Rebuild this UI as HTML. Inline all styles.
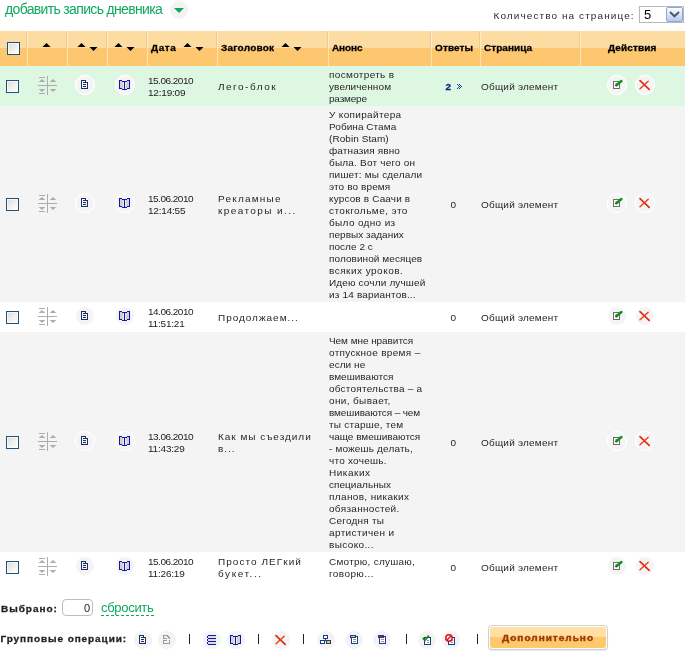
<!DOCTYPE html><html><head><meta charset="utf-8"><title>Дневник</title><style>
html,body{margin:0;padding:0;background:#fff;}
body{width:685px;height:657px;position:relative;overflow:hidden;will-change:transform;font-family:"Liberation Sans",sans-serif;color:#222;}
.abs{position:absolute;}
.t{position:absolute;white-space:nowrap;line-height:13.714px;font-size:10px;letter-spacing:0.1px;color:#262626;transform-origin:0 0;transform:scaleY(0.875);}
.hd{position:absolute;left:0;top:31px;width:685px;height:35px;background:linear-gradient(#fddca1 0,#fddca1 17px,#fdc76f 17px,#fdc76f 35px);}
.sep{position:absolute;top:0;width:1px;height:35px;}
.sepd{background:linear-gradient(#f2c98c 0,#f2c98c 17px,#fdc76f 17px);}
.sepl{background:linear-gradient(#feecca 0,#feecca 17px,#fee3b7 17px);}
.ht{position:absolute;top:12.3px;font-weight:bold;font-size:10px;line-height:12px;color:#000;white-space:nowrap;transform-origin:0 0;transform:scaleY(0.875);-webkit-text-stroke:0.3px #000;}
.sq{transform-origin:0 0;transform:scaleY(0.875);}
.row{position:absolute;left:0;width:685px;}
.cb{position:absolute;width:11px;height:11px;border:1px solid #1c5180;background:linear-gradient(135deg,#dcdcd7 0,#f3f3ef 60%,#fff 100%);box-shadow:inset 0 0 0 1px rgba(252,252,248,0.75);}
.circ{position:absolute;width:18px;height:18px;border:1px solid #fff;border-radius:50%;background:#f4f4f4;}
svg{position:absolute;overflow:visible;}
</style></head><body>
<div class="abs" style="left:5px;top:1px;font-size:14px;line-height:16px;letter-spacing:-0.66px;color:#0fa860;white-space:nowrap;">добавить запись дневника</div>
<div class="abs" style="left:170px;top:1px;width:18px;height:18px;border-radius:50%;background:#f3f3f3;"></div>
<svg style="left:174px;top:8px" width="10" height="5"><path d="M0 0H10L5 5Z" fill="#0fa860"/></svg>
<div class="abs sq" style="left:493.5px;top:9.8px;font-size:10px;line-height:13px;letter-spacing:1.09px;color:#2c2c2c;white-space:nowrap;">Количество на странице:</div>
<div class="abs" style="left:639px;top:6px;width:43px;height:15px;border:1px solid #b8b8b8;background:#fff;"></div>
<div class="abs" style="left:644px;top:7px;font-size:13px;line-height:15px;color:#000;">5</div>
<div class="abs" style="left:666px;top:7px;width:15px;height:13px;border:1px solid #8fa8d0;border-radius:2px;background:linear-gradient(#fdfeff 0,#dce7f7 45%,#b4caea 100%);"></div>
<svg style="left:669px;top:11px" width="11" height="7"><path d="M1 1L5.5 5.3L10 1" stroke="#4d5a6b" stroke-width="2" fill="none"/></svg>
<div class="hd">
<div class="sep sepd" style="left:26px"></div><div class="sep sepl" style="left:27px"></div>
<div class="sep sepd" style="left:66px"></div><div class="sep sepl" style="left:67px"></div>
<div class="sep sepd" style="left:106px"></div><div class="sep sepl" style="left:107px"></div>
<div class="sep sepd" style="left:146px"></div><div class="sep sepl" style="left:147px"></div>
<div class="sep sepd" style="left:216px"></div><div class="sep sepl" style="left:217px"></div>
<div class="sep sepd" style="left:327px"></div><div class="sep sepl" style="left:328px"></div>
<div class="sep sepd" style="left:430px"></div><div class="sep sepl" style="left:431px"></div>
<div class="sep sepd" style="left:479px"></div><div class="sep sepl" style="left:480px"></div>
<div class="sep sepd" style="left:579px"></div><div class="sep sepl" style="left:580px"></div>
<div class="cb" style="left:7px;top:11px"></div>
<svg style="left:43px;top:12px" width="7" height="4"><path d="M3.5 0L7.5 4H-0.5Z" fill="#000"/></svg>
<svg style="left:78px;top:12px" width="7" height="4"><path d="M3.5 0L7.5 4H-0.5Z" fill="#000"/></svg><svg style="left:90px;top:16px" width="7" height="4"><path d="M-0.5 0H7.5L3.5 4Z" fill="#000"/></svg>
<svg style="left:115px;top:12px" width="7" height="4"><path d="M3.5 0L7.5 4H-0.5Z" fill="#000"/></svg><svg style="left:127px;top:16px" width="7" height="4"><path d="M-0.5 0H7.5L3.5 4Z" fill="#000"/></svg>
<div class="ht" style="left:151px;letter-spacing:0.55px">Дата</div><svg style="left:184px;top:12px" width="7" height="4"><path d="M3.5 0L7.5 4H-0.5Z" fill="#000"/></svg><svg style="left:196px;top:16px" width="7" height="4"><path d="M-0.5 0H7.5L3.5 4Z" fill="#000"/></svg>
<div class="ht" style="left:221px;letter-spacing:0.24px">Заголовок</div><svg style="left:282px;top:12px" width="7" height="4"><path d="M3.5 0L7.5 4H-0.5Z" fill="#000"/></svg><svg style="left:294px;top:16px" width="7" height="4"><path d="M-0.5 0H7.5L3.5 4Z" fill="#000"/></svg>
<div class="ht" style="left:332px;letter-spacing:-0.1px">Анонс</div>
<div class="ht" style="left:435px;letter-spacing:0.12px">Ответы</div>
<div class="ht" style="left:484px;letter-spacing:0.04px">Страница</div>
<div class="ht" style="left:608px;letter-spacing:0.1px">Действия</div>
</div>
<div class="row" style="top:66px;height:40px;background:#def7e3">
<div class="cb" style="left:6px;top:14px"></div>
<svg style="left:38px;top:10px" width="19" height="19" shape-rendering="crispEdges"><rect x="9" y="0" width="1" height="19" fill="#b0abae"/><rect x="0" y="9" width="19" height="1" fill="#b0abae"/><rect x="1" y="1" width="6" height="1" fill="#b0abae"/><rect x="1" y="17" width="6" height="1" fill="#b0abae"/></svg><svg style="left:38px;top:10px" width="19" height="19"><path d="M4 3L7.3 6H0.7Z M15 3L18.3 6H11.7Z M0.7 13H7.3L4 16Z M11.7 13H18.3L15 16Z" fill="#b0abae"/></svg>
<div class="circ" style="left:75px;top:9px"></div><svg style="left:75px;top:9px" width="20" height="20" shape-rendering="crispEdges"><circle cx="10" cy="10" r="9.5" fill="none" stroke="#fff" stroke-width="1"/></svg><svg style="left:81px;top:14px" width="7" height="9" shape-rendering="crispEdges"><path d="M0 0H5V2H7V9H0Z M1 1V8H6V3H4V1Z" fill="#1b2f6b" fill-rule="evenodd"/><rect x="2" y="2" width="2" height="1" fill="#1b2f6b"/><rect x="2" y="4" width="3" height="1" fill="#1b2f6b"/><rect x="2" y="6" width="3" height="1" fill="#1b2f6b"/></svg>
<div class="circ" style="left:115px;top:9px"></div><svg style="left:115px;top:9px" width="20" height="20" shape-rendering="crispEdges"><circle cx="10" cy="10" r="9.5" fill="none" stroke="#fff" stroke-width="1"/></svg><svg style="left:119px;top:14px" width="11" height="10" shape-rendering="crispEdges"><rect x="1" y="1" width="4" height="8" fill="#d2d2d2"/><rect x="6" y="1" width="4" height="8" fill="#d2d2d2"/><rect x="4" y="2" width="1" height="7" fill="#ecece0"/><rect x="6" y="2" width="1" height="7" fill="#ecece0"/><rect x="0" y="0" width="1" height="9" fill="#1414b4"/><rect x="10" y="0" width="1" height="9" fill="#1414b4"/><rect x="0" y="0" width="3" height="1" fill="#1414b4"/><rect x="8" y="0" width="3" height="1" fill="#1414b4"/><rect x="3" y="1" width="2" height="1" fill="#1414b4"/><rect x="6" y="1" width="2" height="1" fill="#1414b4"/><rect x="5" y="1" width="1" height="9" fill="#1414b4"/><rect x="0" y="8" width="3" height="1" fill="#1414b4"/><rect x="8" y="8" width="3" height="1" fill="#1414b4"/><rect x="3" y="9" width="5" height="1" fill="#1414b4"/></svg>
<div class="t" style="left:148px;top:8.5px;letter-spacing:-0.5px;color:#222">15.06.2010</div><div class="t" style="left:148px;top:20.5px;letter-spacing:-0.2px;color:#222">12:19:09</div>
<div class="t" style="left:218px;top:15px;letter-spacing:1.5px">Лего-блок</div>
<div class="t" style="left:329px;top:3px;letter-spacing:0.33px">посмотреть в</div><div class="t" style="left:329px;top:15px;letter-spacing:0.09px">увеличенном</div><div class="t" style="left:329px;top:27px;letter-spacing:-0.19px">размере</div>
<div class="t" style="left:445.5px;top:15px;font-weight:bold;color:#0a2a80;letter-spacing:0;-webkit-text-stroke:0.3px #0a2a80">2</div>
<svg style="left:457px;top:18px" width="5" height="5" shape-rendering="crispEdges"><path d="M0 0h1v1h-1zM2 0h1v1h-1zM1 1h1v1h-1zM3 1h1v1h-1zM2 2h1v1h-1zM4 2h1v1h-1zM1 3h1v1h-1zM3 3h1v1h-1zM0 4h1v1h-1zM2 4h1v1h-1z" fill="#1848a0"/></svg>
<div class="t" style="left:481px;top:15px;letter-spacing:0.21px">Общий элемент</div>
<div class="circ" style="left:607px;top:9px"></div><svg style="left:607px;top:9px" width="20" height="20" shape-rendering="crispEdges"><circle cx="10" cy="10" r="9.5" fill="none" stroke="#fff" stroke-width="1"/></svg><svg style="left:613px;top:14px" width="10" height="10"><rect x="0.5" y="1.5" width="6" height="7" fill="#fff" stroke="#6e6e6e" stroke-width="1"/><path d="M2.5 3.5H4M2.5 5.5H3.5" stroke="#8a8a8a" stroke-width="1"/><path d="M3.4 5.3L8.4 1" stroke="#0f9618" stroke-width="2.5" stroke-linecap="round"/><rect x="2" y="5" width="2" height="1" fill="#2a5a2a"/></svg>
<div class="circ" style="left:635px;top:9px"></div><svg style="left:635px;top:9px" width="20" height="20" shape-rendering="crispEdges"><circle cx="10" cy="10" r="9.5" fill="none" stroke="#fff" stroke-width="1"/></svg><svg style="left:639px;top:14px" width="11" height="10"><path d="M1 0.6L10.2 9.3" stroke="#e02c0c" stroke-width="1.7" stroke-linecap="round"/><path d="M9.2 1.2L1 8.8" stroke="#e6401c" stroke-width="1.4" stroke-linecap="round"/></svg>
</div>
<div class="row" style="top:106px;height:196px;background:#f4f4f4">
<div class="cb" style="left:6px;top:92px"></div>
<svg style="left:38px;top:88px" width="19" height="19" shape-rendering="crispEdges"><rect x="9" y="0" width="1" height="19" fill="#b0abae"/><rect x="0" y="9" width="19" height="1" fill="#b0abae"/><rect x="1" y="1" width="6" height="1" fill="#b0abae"/><rect x="1" y="17" width="6" height="1" fill="#b0abae"/></svg><svg style="left:38px;top:88px" width="19" height="19"><path d="M4 3L7.3 6H0.7Z M15 3L18.3 6H11.7Z M0.7 13H7.3L4 16Z M11.7 13H18.3L15 16Z" fill="#b0abae"/></svg>
<div class="circ" style="left:75px;top:87px"></div><svg style="left:75px;top:87px" width="20" height="20" shape-rendering="crispEdges"><circle cx="10" cy="10" r="9.5" fill="none" stroke="#fff" stroke-width="1"/></svg><svg style="left:81px;top:92px" width="7" height="9" shape-rendering="crispEdges"><path d="M0 0H5V2H7V9H0Z M1 1V8H6V3H4V1Z" fill="#1b2f6b" fill-rule="evenodd"/><rect x="2" y="2" width="2" height="1" fill="#1b2f6b"/><rect x="2" y="4" width="3" height="1" fill="#1b2f6b"/><rect x="2" y="6" width="3" height="1" fill="#1b2f6b"/></svg>
<div class="circ" style="left:115px;top:87px"></div><svg style="left:115px;top:87px" width="20" height="20" shape-rendering="crispEdges"><circle cx="10" cy="10" r="9.5" fill="none" stroke="#fff" stroke-width="1"/></svg><svg style="left:119px;top:92px" width="11" height="10" shape-rendering="crispEdges"><rect x="1" y="1" width="4" height="8" fill="#d2d2d2"/><rect x="6" y="1" width="4" height="8" fill="#d2d2d2"/><rect x="4" y="2" width="1" height="7" fill="#ecece0"/><rect x="6" y="2" width="1" height="7" fill="#ecece0"/><rect x="0" y="0" width="1" height="9" fill="#1414b4"/><rect x="10" y="0" width="1" height="9" fill="#1414b4"/><rect x="0" y="0" width="3" height="1" fill="#1414b4"/><rect x="8" y="0" width="3" height="1" fill="#1414b4"/><rect x="3" y="1" width="2" height="1" fill="#1414b4"/><rect x="6" y="1" width="2" height="1" fill="#1414b4"/><rect x="5" y="1" width="1" height="9" fill="#1414b4"/><rect x="0" y="8" width="3" height="1" fill="#1414b4"/><rect x="8" y="8" width="3" height="1" fill="#1414b4"/><rect x="3" y="9" width="5" height="1" fill="#1414b4"/></svg>
<div class="t" style="left:148px;top:86.5px;letter-spacing:-0.5px;color:#222">15.06.2010</div><div class="t" style="left:148px;top:98.5px;letter-spacing:-0.2px;color:#222">12:14:55</div>
<div class="t" style="left:218px;top:87px;letter-spacing:1.22px">Рекламные</div><div class="t" style="left:218px;top:99px;letter-spacing:1.41px">креаторы и...</div>
<div class="t" style="left:329px;top:3px;letter-spacing:0.34px">У копирайтера</div><div class="t" style="left:329px;top:15px;letter-spacing:0.05px">Робина Стама</div><div class="t" style="left:329px;top:27px;letter-spacing:0.07px">(Robin Stam)</div><div class="t" style="left:329px;top:39px;letter-spacing:0.13px">фатназия явно</div><div class="t" style="left:329px;top:51px;letter-spacing:0.2px">была. Вот чего он</div><div class="t" style="left:329px;top:63px;letter-spacing:0.19px">пишет: мы сделали</div><div class="t" style="left:329px;top:75px;letter-spacing:0.12px">это во время</div><div class="t" style="left:329px;top:87px;letter-spacing:0.15px">курсов в Саачи в</div><div class="t" style="left:329px;top:99px;letter-spacing:0.45px">стокгольме, это</div><div class="t" style="left:329px;top:111px;letter-spacing:0.34px">было одно из</div><div class="t" style="left:329px;top:123px;letter-spacing:0.03px">первых заданих</div><div class="t" style="left:329px;top:135px;letter-spacing:0.04px">после 2 с</div><div class="t" style="left:329px;top:147px;letter-spacing:0.07px">половиной месяцев</div><div class="t" style="left:329px;top:159px;letter-spacing:0.48px">всяких уроков.</div><div class="t" style="left:329px;top:171px;letter-spacing:0.15px">Идею сочли лучшей</div><div class="t" style="left:329px;top:183px;letter-spacing:0.18px">из 14 вариантов...</div>
<div class="t" style="left:450.5px;top:93px;letter-spacing:0">0</div>
<div class="t" style="left:481px;top:93px;letter-spacing:0.21px">Общий элемент</div>
<div class="circ" style="left:607px;top:87px"></div><svg style="left:607px;top:87px" width="20" height="20" shape-rendering="crispEdges"><circle cx="10" cy="10" r="9.5" fill="none" stroke="#fff" stroke-width="1"/></svg><svg style="left:613px;top:92px" width="10" height="10"><rect x="0.5" y="1.5" width="6" height="7" fill="#fff" stroke="#6e6e6e" stroke-width="1"/><path d="M2.5 3.5H4M2.5 5.5H3.5" stroke="#8a8a8a" stroke-width="1"/><path d="M3.4 5.3L8.4 1" stroke="#0f9618" stroke-width="2.5" stroke-linecap="round"/><rect x="2" y="5" width="2" height="1" fill="#2a5a2a"/></svg>
<div class="circ" style="left:635px;top:87px"></div><svg style="left:635px;top:87px" width="20" height="20" shape-rendering="crispEdges"><circle cx="10" cy="10" r="9.5" fill="none" stroke="#fff" stroke-width="1"/></svg><svg style="left:639px;top:92px" width="11" height="10"><path d="M1 0.6L10.2 9.3" stroke="#e02c0c" stroke-width="1.7" stroke-linecap="round"/><path d="M9.2 1.2L1 8.8" stroke="#e6401c" stroke-width="1.4" stroke-linecap="round"/></svg>
</div>
<div class="row" style="top:302px;height:30px;background:#ffffff">
<div class="cb" style="left:6px;top:9px"></div>
<svg style="left:38px;top:5px" width="19" height="19" shape-rendering="crispEdges"><rect x="9" y="0" width="1" height="19" fill="#b0abae"/><rect x="0" y="9" width="19" height="1" fill="#b0abae"/><rect x="1" y="1" width="6" height="1" fill="#b0abae"/><rect x="1" y="17" width="6" height="1" fill="#b0abae"/></svg><svg style="left:38px;top:5px" width="19" height="19"><path d="M4 3L7.3 6H0.7Z M15 3L18.3 6H11.7Z M0.7 13H7.3L4 16Z M11.7 13H18.3L15 16Z" fill="#b0abae"/></svg>
<div class="circ" style="left:75px;top:4px"></div><svg style="left:75px;top:4px" width="20" height="20" shape-rendering="crispEdges"><circle cx="10" cy="10" r="9.5" fill="none" stroke="#fff" stroke-width="1"/></svg><svg style="left:81px;top:9px" width="7" height="9" shape-rendering="crispEdges"><path d="M0 0H5V2H7V9H0Z M1 1V8H6V3H4V1Z" fill="#1b2f6b" fill-rule="evenodd"/><rect x="2" y="2" width="2" height="1" fill="#1b2f6b"/><rect x="2" y="4" width="3" height="1" fill="#1b2f6b"/><rect x="2" y="6" width="3" height="1" fill="#1b2f6b"/></svg>
<div class="circ" style="left:115px;top:4px"></div><svg style="left:115px;top:4px" width="20" height="20" shape-rendering="crispEdges"><circle cx="10" cy="10" r="9.5" fill="none" stroke="#fff" stroke-width="1"/></svg><svg style="left:119px;top:9px" width="11" height="10" shape-rendering="crispEdges"><rect x="1" y="1" width="4" height="8" fill="#d2d2d2"/><rect x="6" y="1" width="4" height="8" fill="#d2d2d2"/><rect x="4" y="2" width="1" height="7" fill="#ecece0"/><rect x="6" y="2" width="1" height="7" fill="#ecece0"/><rect x="0" y="0" width="1" height="9" fill="#1414b4"/><rect x="10" y="0" width="1" height="9" fill="#1414b4"/><rect x="0" y="0" width="3" height="1" fill="#1414b4"/><rect x="8" y="0" width="3" height="1" fill="#1414b4"/><rect x="3" y="1" width="2" height="1" fill="#1414b4"/><rect x="6" y="1" width="2" height="1" fill="#1414b4"/><rect x="5" y="1" width="1" height="9" fill="#1414b4"/><rect x="0" y="8" width="3" height="1" fill="#1414b4"/><rect x="8" y="8" width="3" height="1" fill="#1414b4"/><rect x="3" y="9" width="5" height="1" fill="#1414b4"/></svg>
<div class="t" style="left:148px;top:3.5px;letter-spacing:-0.5px;color:#222">14.06.2010</div><div class="t" style="left:148px;top:15.5px;letter-spacing:-0.2px;color:#222">11:51:21</div>
<div class="t" style="left:218px;top:10px;letter-spacing:0.97px">Продолжаем...</div>
<div class="t" style="left:450.5px;top:10px;letter-spacing:0">0</div>
<div class="t" style="left:481px;top:10px;letter-spacing:0.21px">Общий элемент</div>
<div class="circ" style="left:607px;top:4px"></div><svg style="left:607px;top:4px" width="20" height="20" shape-rendering="crispEdges"><circle cx="10" cy="10" r="9.5" fill="none" stroke="#fff" stroke-width="1"/></svg><svg style="left:613px;top:9px" width="10" height="10"><rect x="0.5" y="1.5" width="6" height="7" fill="#fff" stroke="#6e6e6e" stroke-width="1"/><path d="M2.5 3.5H4M2.5 5.5H3.5" stroke="#8a8a8a" stroke-width="1"/><path d="M3.4 5.3L8.4 1" stroke="#0f9618" stroke-width="2.5" stroke-linecap="round"/><rect x="2" y="5" width="2" height="1" fill="#2a5a2a"/></svg>
<div class="circ" style="left:635px;top:4px"></div><svg style="left:635px;top:4px" width="20" height="20" shape-rendering="crispEdges"><circle cx="10" cy="10" r="9.5" fill="none" stroke="#fff" stroke-width="1"/></svg><svg style="left:639px;top:9px" width="11" height="10"><path d="M1 0.6L10.2 9.3" stroke="#e02c0c" stroke-width="1.7" stroke-linecap="round"/><path d="M9.2 1.2L1 8.8" stroke="#e6401c" stroke-width="1.4" stroke-linecap="round"/></svg>
</div>
<div class="row" style="top:332px;height:220px;background:#f4f4f4">
<div class="cb" style="left:6px;top:104px"></div>
<svg style="left:38px;top:100px" width="19" height="19" shape-rendering="crispEdges"><rect x="9" y="0" width="1" height="19" fill="#b0abae"/><rect x="0" y="9" width="19" height="1" fill="#b0abae"/><rect x="1" y="1" width="6" height="1" fill="#b0abae"/><rect x="1" y="17" width="6" height="1" fill="#b0abae"/></svg><svg style="left:38px;top:100px" width="19" height="19"><path d="M4 3L7.3 6H0.7Z M15 3L18.3 6H11.7Z M0.7 13H7.3L4 16Z M11.7 13H18.3L15 16Z" fill="#b0abae"/></svg>
<div class="circ" style="left:75px;top:99px"></div><svg style="left:75px;top:99px" width="20" height="20" shape-rendering="crispEdges"><circle cx="10" cy="10" r="9.5" fill="none" stroke="#fff" stroke-width="1"/></svg><svg style="left:81px;top:104px" width="7" height="9" shape-rendering="crispEdges"><path d="M0 0H5V2H7V9H0Z M1 1V8H6V3H4V1Z" fill="#1b2f6b" fill-rule="evenodd"/><rect x="2" y="2" width="2" height="1" fill="#1b2f6b"/><rect x="2" y="4" width="3" height="1" fill="#1b2f6b"/><rect x="2" y="6" width="3" height="1" fill="#1b2f6b"/></svg>
<div class="circ" style="left:115px;top:99px"></div><svg style="left:115px;top:99px" width="20" height="20" shape-rendering="crispEdges"><circle cx="10" cy="10" r="9.5" fill="none" stroke="#fff" stroke-width="1"/></svg><svg style="left:119px;top:104px" width="11" height="10" shape-rendering="crispEdges"><rect x="1" y="1" width="4" height="8" fill="#d2d2d2"/><rect x="6" y="1" width="4" height="8" fill="#d2d2d2"/><rect x="4" y="2" width="1" height="7" fill="#ecece0"/><rect x="6" y="2" width="1" height="7" fill="#ecece0"/><rect x="0" y="0" width="1" height="9" fill="#1414b4"/><rect x="10" y="0" width="1" height="9" fill="#1414b4"/><rect x="0" y="0" width="3" height="1" fill="#1414b4"/><rect x="8" y="0" width="3" height="1" fill="#1414b4"/><rect x="3" y="1" width="2" height="1" fill="#1414b4"/><rect x="6" y="1" width="2" height="1" fill="#1414b4"/><rect x="5" y="1" width="1" height="9" fill="#1414b4"/><rect x="0" y="8" width="3" height="1" fill="#1414b4"/><rect x="8" y="8" width="3" height="1" fill="#1414b4"/><rect x="3" y="9" width="5" height="1" fill="#1414b4"/></svg>
<div class="t" style="left:148px;top:98.5px;letter-spacing:-0.5px;color:#222">13.06.2010</div><div class="t" style="left:148px;top:110.5px;letter-spacing:-0.2px;color:#222">11:43:29</div>
<div class="t" style="left:218px;top:99px;letter-spacing:0.97px">Как мы съездили</div><div class="t" style="left:218px;top:111px;letter-spacing:1.0px">в...</div>
<div class="t" style="left:329px;top:3px;letter-spacing:-0.06px">Чем мне нравится</div><div class="t" style="left:329px;top:15px;letter-spacing:0.32px">отпускное время –</div><div class="t" style="left:329px;top:27px;letter-spacing:0.07px">если не</div><div class="t" style="left:329px;top:39px;letter-spacing:0.02px">вмешиваются</div><div class="t" style="left:329px;top:51px;letter-spacing:0.22px">обстоятельства – а</div><div class="t" style="left:329px;top:63px;letter-spacing:0.36px">они, бывает,</div><div class="t" style="left:329px;top:75px;letter-spacing:-0.11px">вмешиваются – чем</div><div class="t" style="left:329px;top:87px;letter-spacing:0.23px">ты старше, тем</div><div class="t" style="left:329px;top:99px;letter-spacing:-0.01px">чаще вмешиваются</div><div class="t" style="left:329px;top:111px;letter-spacing:0.15px">- можешь делать,</div><div class="t" style="left:329px;top:123px;letter-spacing:0.24px">что хочешь.</div><div class="t" style="left:329px;top:135px;letter-spacing:0.51px">Никаких</div><div class="t" style="left:329px;top:147px;letter-spacing:0.04px">специальных</div><div class="t" style="left:329px;top:159px;letter-spacing:0.36px">планов, никаких</div><div class="t" style="left:329px;top:171px;letter-spacing:0.3px">обязанностей.</div><div class="t" style="left:329px;top:183px;letter-spacing:0.24px">Сегодня ты</div><div class="t" style="left:329px;top:195px;letter-spacing:0.38px">артистичен и</div><div class="t" style="left:329px;top:207px;letter-spacing:0.37px">высоко...</div>
<div class="t" style="left:450.5px;top:105px;letter-spacing:0">0</div>
<div class="t" style="left:481px;top:105px;letter-spacing:0.21px">Общий элемент</div>
<div class="circ" style="left:607px;top:99px"></div><svg style="left:607px;top:99px" width="20" height="20" shape-rendering="crispEdges"><circle cx="10" cy="10" r="9.5" fill="none" stroke="#fff" stroke-width="1"/></svg><svg style="left:613px;top:104px" width="10" height="10"><rect x="0.5" y="1.5" width="6" height="7" fill="#fff" stroke="#6e6e6e" stroke-width="1"/><path d="M2.5 3.5H4M2.5 5.5H3.5" stroke="#8a8a8a" stroke-width="1"/><path d="M3.4 5.3L8.4 1" stroke="#0f9618" stroke-width="2.5" stroke-linecap="round"/><rect x="2" y="5" width="2" height="1" fill="#2a5a2a"/></svg>
<div class="circ" style="left:635px;top:99px"></div><svg style="left:635px;top:99px" width="20" height="20" shape-rendering="crispEdges"><circle cx="10" cy="10" r="9.5" fill="none" stroke="#fff" stroke-width="1"/></svg><svg style="left:639px;top:104px" width="11" height="10"><path d="M1 0.6L10.2 9.3" stroke="#e02c0c" stroke-width="1.7" stroke-linecap="round"/><path d="M9.2 1.2L1 8.8" stroke="#e6401c" stroke-width="1.4" stroke-linecap="round"/></svg>
</div>
<div class="row" style="top:552px;height:30px;background:#ffffff">
<div class="cb" style="left:6px;top:9px"></div>
<svg style="left:38px;top:5px" width="19" height="19" shape-rendering="crispEdges"><rect x="9" y="0" width="1" height="19" fill="#b0abae"/><rect x="0" y="9" width="19" height="1" fill="#b0abae"/><rect x="1" y="1" width="6" height="1" fill="#b0abae"/><rect x="1" y="17" width="6" height="1" fill="#b0abae"/></svg><svg style="left:38px;top:5px" width="19" height="19"><path d="M4 3L7.3 6H0.7Z M15 3L18.3 6H11.7Z M0.7 13H7.3L4 16Z M11.7 13H18.3L15 16Z" fill="#b0abae"/></svg>
<div class="circ" style="left:75px;top:4px"></div><svg style="left:75px;top:4px" width="20" height="20" shape-rendering="crispEdges"><circle cx="10" cy="10" r="9.5" fill="none" stroke="#fff" stroke-width="1"/></svg><svg style="left:81px;top:9px" width="7" height="9" shape-rendering="crispEdges"><path d="M0 0H5V2H7V9H0Z M1 1V8H6V3H4V1Z" fill="#1b2f6b" fill-rule="evenodd"/><rect x="2" y="2" width="2" height="1" fill="#1b2f6b"/><rect x="2" y="4" width="3" height="1" fill="#1b2f6b"/><rect x="2" y="6" width="3" height="1" fill="#1b2f6b"/></svg>
<div class="circ" style="left:115px;top:4px"></div><svg style="left:115px;top:4px" width="20" height="20" shape-rendering="crispEdges"><circle cx="10" cy="10" r="9.5" fill="none" stroke="#fff" stroke-width="1"/></svg><svg style="left:119px;top:9px" width="11" height="10" shape-rendering="crispEdges"><rect x="1" y="1" width="4" height="8" fill="#d2d2d2"/><rect x="6" y="1" width="4" height="8" fill="#d2d2d2"/><rect x="4" y="2" width="1" height="7" fill="#ecece0"/><rect x="6" y="2" width="1" height="7" fill="#ecece0"/><rect x="0" y="0" width="1" height="9" fill="#1414b4"/><rect x="10" y="0" width="1" height="9" fill="#1414b4"/><rect x="0" y="0" width="3" height="1" fill="#1414b4"/><rect x="8" y="0" width="3" height="1" fill="#1414b4"/><rect x="3" y="1" width="2" height="1" fill="#1414b4"/><rect x="6" y="1" width="2" height="1" fill="#1414b4"/><rect x="5" y="1" width="1" height="9" fill="#1414b4"/><rect x="0" y="8" width="3" height="1" fill="#1414b4"/><rect x="8" y="8" width="3" height="1" fill="#1414b4"/><rect x="3" y="9" width="5" height="1" fill="#1414b4"/></svg>
<div class="t" style="left:148px;top:3.5px;letter-spacing:-0.5px;color:#222">15.06.2010</div><div class="t" style="left:148px;top:15.5px;letter-spacing:-0.2px;color:#222">11:26:19</div>
<div class="t" style="left:218px;top:4px;letter-spacing:1.05px">Просто ЛЕГкий</div><div class="t" style="left:218px;top:16px;letter-spacing:1.57px">букет...</div>
<div class="t" style="left:329px;top:4px;letter-spacing:0.25px">Смотрю, слушаю,</div><div class="t" style="left:329px;top:16px;letter-spacing:0.41px">говорю...</div>
<div class="t" style="left:450.5px;top:10px;letter-spacing:0">0</div>
<div class="t" style="left:481px;top:10px;letter-spacing:0.21px">Общий элемент</div>
<div class="circ" style="left:607px;top:4px"></div><svg style="left:607px;top:4px" width="20" height="20" shape-rendering="crispEdges"><circle cx="10" cy="10" r="9.5" fill="none" stroke="#fff" stroke-width="1"/></svg><svg style="left:613px;top:9px" width="10" height="10"><rect x="0.5" y="1.5" width="6" height="7" fill="#fff" stroke="#6e6e6e" stroke-width="1"/><path d="M2.5 3.5H4M2.5 5.5H3.5" stroke="#8a8a8a" stroke-width="1"/><path d="M3.4 5.3L8.4 1" stroke="#0f9618" stroke-width="2.5" stroke-linecap="round"/><rect x="2" y="5" width="2" height="1" fill="#2a5a2a"/></svg>
<div class="circ" style="left:635px;top:4px"></div><svg style="left:635px;top:4px" width="20" height="20" shape-rendering="crispEdges"><circle cx="10" cy="10" r="9.5" fill="none" stroke="#fff" stroke-width="1"/></svg><svg style="left:639px;top:9px" width="11" height="10"><path d="M1 0.6L10.2 9.3" stroke="#e02c0c" stroke-width="1.7" stroke-linecap="round"/><path d="M9.2 1.2L1 8.8" stroke="#e6401c" stroke-width="1.4" stroke-linecap="round"/></svg>
</div>
<div class="abs sq" style="left:1px;top:602.6px;-webkit-text-stroke:0.3px #222;font-size:10px;font-weight:bold;line-height:13px;color:#222;white-space:nowrap;letter-spacing:0.97px">Выбрано:</div>
<div class="abs" style="left:62px;top:599px;width:29px;height:15px;border:1px solid #bdbdbd;border-radius:4px;background:#fff;"></div>
<div class="abs" style="left:62px;top:601px;width:28px;text-align:right;font-size:11px;line-height:14px;color:#222;">0</div>
<div class="abs" style="left:101px;top:600px;font-size:13px;line-height:15px;color:#0fa860;white-space:nowrap;letter-spacing:-0.3px;border-bottom:1px dashed #0fa860;">сбросить</div>
<div class="abs sq" style="left:0.5px;top:633.2px;-webkit-text-stroke:0.3px #222;font-size:10px;font-weight:bold;line-height:13px;color:#222;white-space:nowrap;letter-spacing:0.91px">Групповые операции:</div>
<div class="abs" style="left:134px;top:631px;width:18px;height:18px;border-radius:50%;background:#f3f3f3;"></div><svg style="left:139px;top:635px" width="7" height="9" shape-rendering="crispEdges"><path d="M0 0H5V2H7V9H0Z M1 1V8H6V3H4V1Z" fill="#1b2f6b" fill-rule="evenodd"/><rect x="2" y="2" width="2" height="1" fill="#1b2f6b"/><rect x="2" y="4" width="3" height="1" fill="#1b2f6b"/><rect x="2" y="6" width="3" height="1" fill="#1b2f6b"/></svg>
<div class="abs" style="left:158px;top:631px;width:18px;height:18px;border-radius:50%;background:#f3f3f3;"></div><svg style="left:163px;top:635px" width="8" height="9" shape-rendering="crispEdges"><path d="M0 0H5V1H0Z M0 1H1V3H0Z M4 1H6V2H4Z M5 2H7V3H5Z M0 3H4V4H0Z M6 3H7V4H6Z M0 5H4V6H0Z M6 5H7V6H6Z M0 6H1V8H0Z M6 6H7V8H6Z M0 8H7V9H0Z" fill="#9a9a9a"/></svg>
<div class="abs" style="left:189px;top:634px;width:1px;height:10px;background:#222;"></div>
<div class="abs" style="left:203px;top:631px;width:18px;height:18px;border-radius:50%;background:#f3f3f3;"></div><svg style="left:207px;top:635px" width="9" height="10" shape-rendering="crispEdges"><rect x="1" y="1" width="8" height="8" fill="#dcdcd8"/><path d="M1 0H9V1H1Z M1 3H9V4H1Z M1 6H9V7H1Z M1 9H9V10H1Z M0 1H1V3H0Z M0 4H1V6H0Z M0 7H1V9H0Z" fill="#1414b4"/></svg>
<div class="abs" style="left:227px;top:631px;width:18px;height:18px;border-radius:50%;background:#f3f3f3;"></div><svg style="left:230px;top:635px" width="11" height="10" shape-rendering="crispEdges"><rect x="1" y="1" width="4" height="8" fill="#d2d2d2"/><rect x="6" y="1" width="4" height="8" fill="#d2d2d2"/><rect x="4" y="2" width="1" height="7" fill="#ecece0"/><rect x="6" y="2" width="1" height="7" fill="#ecece0"/><rect x="0" y="0" width="1" height="9" fill="#1414b4"/><rect x="10" y="0" width="1" height="9" fill="#1414b4"/><rect x="0" y="0" width="3" height="1" fill="#1414b4"/><rect x="8" y="0" width="3" height="1" fill="#1414b4"/><rect x="3" y="1" width="2" height="1" fill="#1414b4"/><rect x="6" y="1" width="2" height="1" fill="#1414b4"/><rect x="5" y="1" width="1" height="9" fill="#1414b4"/><rect x="0" y="8" width="3" height="1" fill="#1414b4"/><rect x="8" y="8" width="3" height="1" fill="#1414b4"/><rect x="3" y="9" width="5" height="1" fill="#1414b4"/></svg>
<div class="abs" style="left:258px;top:634px;width:1px;height:10px;background:#222;"></div>
<div class="abs" style="left:272px;top:631px;width:18px;height:18px;border-radius:50%;background:#f3f3f3;"></div><svg style="left:275px;top:635px" width="11" height="10"><path d="M1 0.6L10.2 9.3" stroke="#e02c0c" stroke-width="1.7" stroke-linecap="round"/><path d="M9.2 1.2L1 8.8" stroke="#e6401c" stroke-width="1.4" stroke-linecap="round"/></svg>
<div class="abs" style="left:303px;top:634px;width:1px;height:10px;background:#222;"></div>
<div class="abs" style="left:317px;top:631px;width:18px;height:18px;border-radius:50%;background:#f3f3f3;"></div><svg style="left:320px;top:635px" width="11" height="9" shape-rendering="crispEdges"><rect x="3.5" y="0.5" width="4" height="3" fill="#fff" stroke="#1b3a8b"/><rect x="0.5" y="5.5" width="4" height="3" fill="#fff" stroke="#1b3a8b"/><rect x="6.5" y="5.5" width="4" height="3" fill="#f0d020" stroke="#1b3a8b"/><path d="M5.5 4V5M2 5.5H9" stroke="#1b3a8b" fill="none"/></svg>
<div class="abs" style="left:345px;top:631px;width:18px;height:18px;border-radius:50%;background:#f3f3f3;"></div><svg style="left:350px;top:635px" width="8" height="9" shape-rendering="crispEdges"><rect x="1" y="1" width="7" height="8" fill="#1c3c94"/><rect x="2" y="2" width="5" height="6" fill="#fff"/><rect x="0" y="0" width="6" height="3" fill="#1c3c94"/><rect x="1" y="1" width="4" height="1" fill="#f0d020"/><rect x="3" y="4" width="3" height="1" fill="#909090"/><rect x="3" y="6" width="3" height="1" fill="#909090"/></svg>
<div class="abs" style="left:373px;top:631px;width:18px;height:18px;border-radius:50%;background:#f3f3f3;"></div><svg style="left:378px;top:635px" width="8" height="9" shape-rendering="crispEdges"><rect x="1" y="1" width="7" height="8" fill="#1c3c94"/><rect x="2" y="2" width="5" height="6" fill="#fff"/><rect x="0" y="0" width="6" height="3" fill="#1c3c94"/><rect x="1" y="1" width="4" height="1" fill="#e8101c"/><rect x="3" y="4" width="3" height="1" fill="#909090"/><rect x="3" y="6" width="3" height="1" fill="#909090"/></svg>
<div class="abs" style="left:406px;top:634px;width:1px;height:10px;background:#222;"></div>
<div class="abs" style="left:418px;top:631px;width:18px;height:18px;border-radius:50%;background:#f3f3f3;"></div><svg style="left:424px;top:637px" width="7" height="8" shape-rendering="crispEdges"><rect x="0" y="0" width="7" height="8" fill="#1c3c94"/><rect x="1" y="1" width="5" height="6" fill="#fff"/><rect x="3" y="3" width="2" height="1" fill="#909090"/><rect x="3" y="5" width="2" height="1" fill="#909090"/></svg><svg style="left:422px;top:635px" width="8" height="7"><path d="M0.8 3L3 5.2L6.8 0.6" stroke="#0f8c14" stroke-width="1.8" fill="none"/></svg>
<div class="abs" style="left:442px;top:631px;width:18px;height:18px;border-radius:50%;background:#f3f3f3;"></div><svg style="left:448px;top:637px" width="7" height="8" shape-rendering="crispEdges"><rect x="0" y="0" width="7" height="8" fill="#1c3c94"/><rect x="1" y="1" width="5" height="6" fill="#fff"/><rect x="3" y="3" width="2" height="1" fill="#909090"/><rect x="3" y="5" width="2" height="1" fill="#909090"/></svg><svg style="left:445px;top:634px" width="8" height="8"><circle cx="4" cy="4" r="3.2" stroke="#d8141c" stroke-width="1.5" fill="#fff"/><path d="M1.8 6.2L6.2 1.8" stroke="#d8141c" stroke-width="1.5"/></svg>
<div class="abs" style="left:477px;top:634px;width:1px;height:10px;background:#222;"></div>
<div class="abs" style="left:488px;top:625px;width:118px;height:23px;border:1px solid #cfcfcf;border-radius:4px;background:#fff;box-shadow:0 1px 1px rgba(0,0,0,0.08);"></div>
<div class="abs" style="left:490px;top:627px;width:116px;height:21px;border-radius:3px;background:linear-gradient(#ffdfa3 0,#ffdfa3 10px,#ffc96b 10px,#ffc96b 100%);"></div>
<div class="abs sq" style="left:502px;top:631.9px;-webkit-text-stroke:0.45px #9c3a0c;font-size:10px;font-weight:bold;line-height:13px;color:#9c3a0c;white-space:nowrap;letter-spacing:1.01px;">Дополнительно</div>
</body></html>
